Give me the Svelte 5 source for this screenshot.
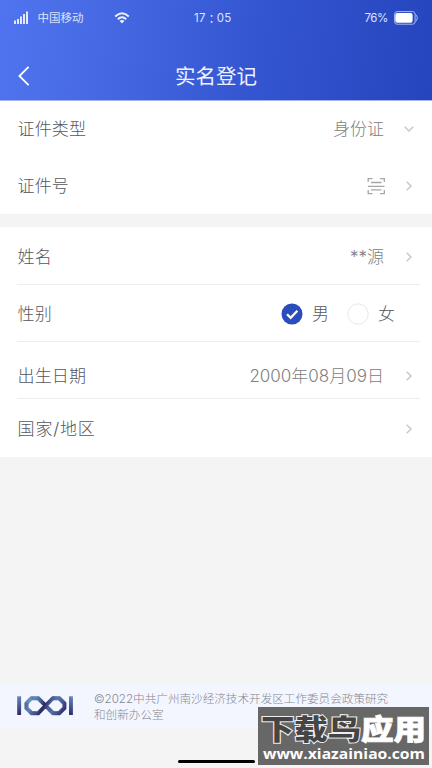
<script>
  const first = [
    { label: '证件类型', value: '身份证', arrow: 'down' },
    { label: '证件号', scan: true, arrow: 'right' }
  ];
  const second = [
    { label: '姓名', value: '**源', arrow: 'right' },
    { label: '性别', gender: true },
    { label: '出生日期', value: '2000年08月09日', arrow: 'right', low: true },
    { label: '国家/地区', arrow: 'right', wide: true }
  ];
  let gender = $state('男');
</script>

{#snippet row(item)}
  <div class="row" class:low={item.low}>
    <span class="label" class:wide={item.wide}>{item.label}</span>
    {#if item.gender}
      <div class="radios">
        {#each ['男', '女'] as g}
          <button class="radio" onclick={() => (gender = g)}>
            <svg width="22" height="22" viewBox="0 0 22 22" fill="none">
              {#if gender === g}
                <circle cx="11" cy="11" r="10.5" fill="#2b4cbd" />
                <path d="M6 11.2l3.7 3.6 6.7-7" stroke="#fff" stroke-width="2.3" />
              {:else}
                <circle cx="11" cy="11" r="10.2" stroke="#e8e8e8" />
              {/if}
            </svg>
            <span>{g}</span>
          </button>
        {/each}
      </div>
    {:else}
      {#if item.value}<span class="value">{item.value}</span>{/if}
      {#if item.scan}
        <svg class="scan" width="20" height="18" viewBox="0 0 20 18" fill="none" stroke="#a6a6a6" stroke-width="1.3">
          <path d="M2.2 5V1.6H6.5M14 1.6h4.3V5M2.2 13v3.7h4.3M14 16.7h4.3V13M5 5.5h10.5M2 9.3h16.5M5 12.9h10.5" />
        </svg>
      {/if}
      <svg class="arrow" width="12" height="12" viewBox="0 0 12 12" fill="none" stroke="#c9c9c9" stroke-width="1.5">
        {#if item.arrow === 'down'}
          <path d="M1.7 3.7L6 8l4.3-4.3" />
        {:else}
          <path d="M3.7 1.8L8 6l-4.3 4.2" />
        {/if}
      </svg>
    {/if}
  </div>
{/snippet}

<div class="screen">
  <header>
    <div class="status">
      <svg class="signal" width="15" height="14" viewBox="0 0 15 14" fill="#e3eaff">
        <path d="M0 9.5h2V13H0zM3 8h2v5H3zM6 5.5h2V13H6zM9 3h2v10H9zM12 0.5h2V13h-2z" />
      </svg>
      <span class="carrier">中国移动</span>
      <svg class="wifi" width="16" height="12" viewBox="0 0 16 12" fill="none" stroke="#eef2ff" stroke-width="1.9">
        <path d="M1.2 4.5Q8-1.9 14.8 4.5M3.8 7.2q4.2-3.7 8.4 0" />
        <path d="M5.5 8.8Q8 7 10.5 8.8L8 11.4z" fill="#eef2ff" stroke="none" />
      </svg>
      <span class="time">17<span class="colon">：</span>05</span>
      <span class="percent">76%</span>
      <svg class="battery" width="24" height="14" viewBox="0 0 24 14" fill="none">
        <rect x="0.6" y="0.6" width="20.5" height="12.6" rx="2.5" stroke="#a9b9f3" />
        <rect x="1.3" y="2" width="17.3" height="9.8" rx="2" fill="#fff" />
        <path d="M21.4 3.2C23.8 5 23.8 9 21.4 10.8" stroke="#a9b9f3" />
      </svg>
    </div>
    <div class="nav">
      <svg class="back" width="12" height="20" viewBox="0 0 12 20" fill="none" stroke="#fff" stroke-width="1.8">
        <path d="M10.6 0.8L1.4 10l9.2 9.2" />
      </svg>
      <h1>实名登记</h1>
    </div>
  </header>

  <section class="plain">
    {#each first as item}{@render row(item)}{/each}
  </section>
  <section class="lined">
    {#each second as item}{@render row(item)}{/each}
  </section>

  <footer>
    <svg class="logo" width="58" height="22" viewBox="0 0 58 22" fill="none">
      <defs>
        <linearGradient id="bar" x1="0" y1="0" x2="0" y2="1">
          <stop offset="0" stop-color="#6287b8" />
          <stop offset="1" stop-color="#302b68" />
        </linearGradient>
        <linearGradient id="loop" gradientUnits="userSpaceOnUse" x1="8" y1="2" x2="45" y2="20">
          <stop offset="0" stop-color="#4b659f" />
          <stop offset="0.25" stop-color="#7ba8d0" />
          <stop offset="0.52" stop-color="#292961" />
          <stop offset="0.75" stop-color="#6790c0" />
          <stop offset="1" stop-color="#35377a" />
        </linearGradient>
      </defs>
      <rect x="1.2" y="1.3" width="3.9" height="18.7" fill="url(#bar)" />
      <rect x="53" y="1.3" width="3.9" height="18.7" fill="url(#bar)" />
      <path d="M15.5 3.2h6.7L37 18.2h6.2l5.2-5V8.3l-5.2-5.1H37L22.2 18.2h-6.7l-5-5V8.3z" stroke="url(#loop)" stroke-width="4" />
      <path d="M15.5 3.2h6.5l4 4M37 3.2h6l5 5" stroke="#405895" stroke-width="4" stroke-opacity=".4" />
      <path d="M10.5 8v5l5 5h4M48 13l-5 5h-6l-4-4" stroke="#343873" stroke-width="4" stroke-opacity=".35" />
    </svg>
    <p>©2022中共广州南沙经济技术开发区工作委员会政策研究<br />和创新办公室</p>
  </footer>
  <div class="home"></div>

  <div class="mark">
    <svg width="171" height="58" viewBox="0 0 171 58">
      <g class="brand">
        <text class="dark" x="3" y="33" textLength="100" lengthAdjust="spacingAndGlyphs">下载鸟</text>
        <text class="light" x="103" y="33" textLength="65" lengthAdjust="spacingAndGlyphs">应用</text>
      </g>
      <text class="site" x="5" y="52" textLength="162" lengthAdjust="spacingAndGlyphs">www.xiazainiao.com</text>
    </svg>
  </div>
</div>

<style>
  .screen {
    position: relative;
    display: flex;
    flex-direction: column;
    width: 432px;
    height: 768px;
    overflow: hidden;
    background: #f4f4f4;
    font-family: "Liberation Sans", "Noto Sans CJK SC", sans-serif;
  }
  svg { display: block; flex: none; }
  header {
    box-sizing: border-box;
    height: 101px;
    flex: none;
    background: linear-gradient(97deg, #5074ef 0%, #4668e3 25%, #3455d0 60%, #2445bd 100%);
    border-bottom: 1px solid #a5b3e8;
    color: #edf1ff;
  }
  .status {
    display: flex;
    align-items: center;
    height: 35px;
    padding: 0 14px 0 14px;
    font: 11.5px/20px "Inter", "Noto Sans CJK SC", sans-serif;
    color: #dce4ff;
  }
  .carrier { margin-left: 8.5px; width: 46.5px; white-space: nowrap; }
  .wifi { margin-left: 30px; }
  .time { display: flex; margin-left: 64px; width: 40px; letter-spacing: .3px; white-space: nowrap; }
  .colon { width: 11px; font-family: "Noto Sans CJK TC", sans-serif; }
  .percent { margin-left: auto; letter-spacing: -.4px; }
  .battery { margin-left: 6px; }
  .nav {
    display: grid;
    grid-template-columns: 60px 1fr 60px;
    align-items: center;
    height: 65px;
    padding-top: 8px;
    box-sizing: border-box;
  }
  .back { margin: 8px 0 0 18px; }
  h1 {
    margin: 7px 0 0;
    text-align: center;
    font: 400 20.5px/30px "Noto Sans CJK SC", sans-serif;
  }
  section { flex: none; background: #fff; }
  .plain { height: 113px; margin-bottom: 13px; }
  .lined { height: 230px; }
  .row {
    display: flex;
    align-items: center;
    box-sizing: border-box;
    height: 57px;
    margin-left: 17px;
    margin-right: 12px;
    padding-left: .6px;
    padding-right: 5px;
    font: 300 17px/26px "Inter", "Noto Sans CJK SC", sans-serif;
    color: #54575e;
  }
  .plain .row { height: 57px; padding-bottom: 1px; }
  .lined .row { border-bottom: 1px solid #eee; height: 57px; padding-top: 2px; }
  .lined .row:first-child { height: 58px; }
  .lined .row.low { padding-top: 12px; }
  .lined .row:last-child { border-bottom: 0; padding-top: 3px; }
  .label { margin-right: auto; letter-spacing: .1px; }
  .label.wide { letter-spacing: .8px; }
  .value { color: #808080; }
  .arrow { margin-left: 19px; }
  .scan { margin-right: -2px; }
  .radios { display: flex; gap: 18px; padding-right: 20px; }
  .radio {
    display: flex;
    align-items: center;
    gap: 9px;
    padding: 0;
    border: 0;
    background: none;
    font: inherit;
    color: inherit;
  }
  footer {
    display: flex;
    align-items: center;
    height: 44px;
    flex: none;
    margin-top: 227px;
    padding-left: 16px;
    background: #f3f6ff;
  }
  footer p {
    margin: 2px 0 0 20px;
    font: 300 11.6px/16px "Inter", "Noto Sans CJK SC", sans-serif;
    color: #85888f;
    white-space: nowrap;
  }
  .home {
    flex: none;
    width: 77px;
    height: 3px;
    margin: 32px auto 0;
    border-radius: 2px;
    background: #000;
  }
  .mark {
    position: absolute;
    left: 258px;
    top: 707px;
    width: 171px;
    height: 58px;
    background: #676767;
  }
  .brand { font: 900 28px "Liberation Sans", "Noto Sans CJK SC", sans-serif; }
  .dark {
    fill: #454545;
    stroke: #eee;
    stroke-width: 2px;
    paint-order: stroke;
  }
  .light { fill: #fff; stroke: #fff; stroke-width: .8px; }
  .site { font: 700 14.7px "Open Sans", "Noto Sans", sans-serif; fill: #fff; }
</style>
